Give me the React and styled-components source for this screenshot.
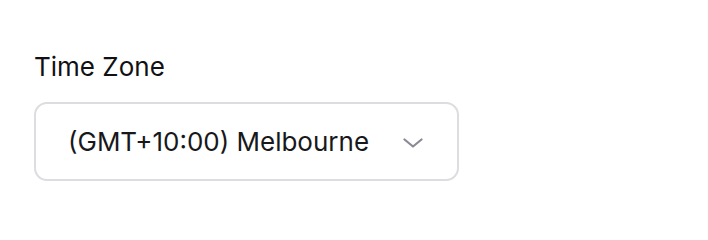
import React from "react";
import styled, { createGlobalStyle } from "styled-components";

const GlobalStyle = createGlobalStyle`
  html, body {
    margin: 0;
    padding: 0;
    background: #ffffff;
  }
  body {
    font-family: Inter, "Noto Sans", "Liberation Sans", sans-serif;
    -webkit-font-smoothing: antialiased;
  }
`;

const Page = styled.div`
  width: 708px;
  height: 226px;
  box-sizing: border-box;
  padding: 51px 0 0 34px;
`;

const Field = styled.div`
  display: flex;
  flex-direction: column;
  gap: 19px;
  width: 425px;
`;

const Label = styled.label`
  font-size: 26px;
  line-height: 32px;
  font-weight: 400;
  color: #111114;
`;

const Select = styled.div`
  display: flex;
  align-items: center;
  justify-content: space-between;
  height: 79px;
  box-sizing: border-box;
  padding: 0 34px 0 32px;
  border: 2px solid #dcdce1;
  border-radius: 13px;
  background: #fff;
  cursor: pointer;
`;

const Value = styled.span`
  font-size: 26px;
  color: #18181b;
`;

const Chevron = styled.svg`
  width: 20px;
  height: 10px;
  margin-top: 2px;
  color: #8a8a96;
`;

export default function App() {
  return (
    <>
      <GlobalStyle />
      <Page>
        <Field>
          <Label>Time Zone</Label>
          <Select>
            <Value>(GMT+10:00) Melbourne</Value>
            <Chevron viewBox="0 0 20 10" fill="none">
              <polyline
                points="1.5,1.5 10,8.5 18.5,1.5"
                stroke="currentColor"
                strokeWidth="2.2"
                strokeLinecap="round"
                strokeLinejoin="round"
              />
            </Chevron>
          </Select>
        </Field>
      </Page>
    </>
  );
}
